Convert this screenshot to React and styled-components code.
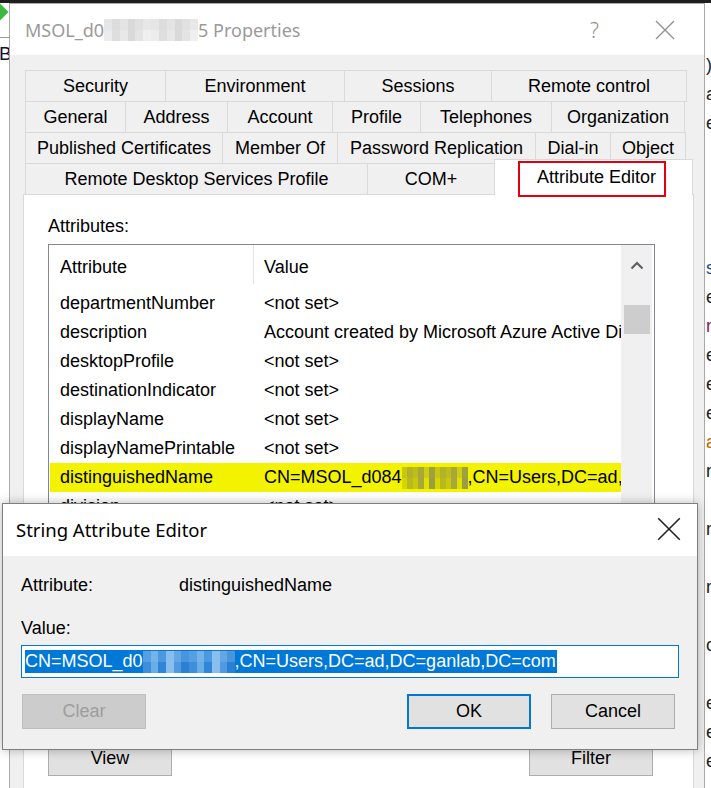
import styled, { createGlobalStyle } from 'styled-components';

const GlobalStyle = createGlobalStyle`
  html, body { margin: 0; padding: 0; background: #fff; }
  body { font-family: 'Liberation Sans', Arial, sans-serif; overflow: hidden; }
  * { box-sizing: border-box; }
`;

const tabRows = [
  [['Security', 141], ['Environment', 180], ['Sessions', 148], ['Remote control', 196]],
  [['General', 101], ['Address', 103], ['Account', 106], ['Profile', 89], ['Telephones', 132], ['Organization', 134]],
  [['Published Certificates', 198], ['Member Of', 116], ['Password Replication', 199], ['Dial-in', 76], ['Object', 76]],
];

const attributes = [
  ['departmentNumber', '<not set>'],
  ['description', 'Account created by Microsoft Azure Active Directory Connect'],
  ['desktopProfile', '<not set>'],
  ['destinationIndicator', '<not set>'],
  ['displayName', '<not set>'],
  ['displayNamePrintable', '<not set>'],
  ['distinguishedName', null],
  ['division', '<not set>'],
  ['dnQualifier', '<not set>'],
  ['dSCorePropagationData', '0x0 = ( )'],
  ['employeeID', '<not set>'],
  ['employeeNumber', '<not set>'],
  ['employeeType', '<not set>'],
  ['extensionName', '<not set>'],
  ['facsimileTelephoneNumber', '<not set>'],
  ['gecos', '<not set>'],
];

// letters of the app behind, cut by the window edge
const stripLetters = [
  [')', '#222'], ['a', '#222'], ['e', '#222'], ['', '#000'], ['', '#000'], ['', '#000'],
  ['', '#000'], ['s', '#1a4f8a'], ['e', '#222'], ['r', '#7a1e6a'], ['e', '#222'], ['e', '#222'],
  ['e', '#222'], ['a', '#c06000'], ['r', '#222'], ['', '#000'], ['r', '#222'], ['', '#000'],
  ['r', '#222'], ['', '#000'], ['c', '#222'], ['', '#000'], ['e', '#222'], ['e', '#222'],
  ['e', '#222'],
];

export default function App() {
  return (
    <>
      <GlobalStyle />
      <Desktop>
        <TopBar />
        <Screen>
          <LeftStrip>
            <GreenMark />
            <StripRule />
            <StripLetter>B</StripLetter>
          </LeftStrip>

          <Window>
            <TitleBar>
              <TitleText inactive>
                MSOL_d0
                <Pixelated tone="gray" w={94} />
                5 Properties
              </TitleText>
              <Caption inactive>
                <HelpGlyph>?</HelpGlyph>
                <CloseIcon color="#8f8f8f" />
              </Caption>
            </TitleBar>

            <WindowBody>
              <TabStrip>
                {tabRows.map((row, i) => (
                  <TabRow key={i}>
                    {row.map(([label, w]) => (
                      <Tab key={label} w={w}>{label}</Tab>
                    ))}
                  </TabRow>
                ))}
                <TabRow>
                  <Tab w={343}>Remote Desktop Services Profile</Tab>
                  <Tab w={128}>COM+</Tab>
                  <ActiveTab>
                    Attribute Editor
                    <Highlight />
                  </ActiveTab>
                </TabRow>
              </TabStrip>

              <Panel>
                <FieldLabel>Attributes:</FieldLabel>
                <ListBox>
                  <ListColumns>
                    <HeaderRow>
                      <NameCell header>Attribute</NameCell>
                      <ValueCell header>Value</ValueCell>
                    </HeaderRow>
                    {attributes.map(([name, value]) => (
                      <Row key={name} selected={value === null}>
                        <NameCell>{name}</NameCell>
                        <ValueCell>
                          {value === null ? (
                            <>
                              CN=MSOL_d084
                              <Pixelated tone="olive" w={66} />
                              ,CN=Users,DC=ad,DC=ganlab,DC=com
                            </>
                          ) : (
                            value
                          )}
                        </ValueCell>
                      </Row>
                    ))}
                  </ListColumns>
                  <ScrollBar>
                    <ScrollArrow>
                      <svg width="14" height="9" viewBox="0 0 14 9">
                        <path d="M1.5 7.5 L7 2 L12.5 7.5" fill="none" stroke="#606060" strokeWidth="2.2" />
                      </svg>
                    </ScrollArrow>
                    <Thumb />
                  </ScrollBar>
                </ListBox>
                <PanelButtons>
                  <Button w={124}>View</Button>
                  <Button w={124} style={{ marginRight: 2 }}>Filter</Button>
                </PanelButtons>
              </Panel>
            </WindowBody>
          </Window>

          <RightStrip>
            {stripLetters.map(([ch, c], i) => (
              <StripLine key={i} color={c}>{ch}</StripLine>
            ))}
          </RightStrip>
        </Screen>

        <Dialog>
          <TitleBar dialog>
            <TitleText>String Attribute Editor</TitleText>
            <Caption dialog>
              <CloseIcon color="#222" size={24} />
            </Caption>
          </TitleBar>
          <DialogBody>
            <InfoRow>
              <InfoLabel>Attribute:</InfoLabel>
              <span>distinguishedName</span>
            </InfoRow>
            <ValueLabel>Value:</ValueLabel>
            <TextBox>
              <Selection>
                CN=MSOL_d0
                <Pixelated tone="blue" w={92} />
                ,CN=Users,DC=ad,DC=ganlab,DC=com
              </Selection>
            </TextBox>
            <DialogButtons>
              <Button w={124} disabled style={{ marginLeft: 1 }}>Clear</Button>
              <Spacer />
              <Button w={124} primary>OK</Button>
              <Button w={124} style={{ marginRight: 4 }}>Cancel</Button>
            </DialogButtons>
          </DialogBody>
        </Dialog>
      </Desktop>
    </>
  );
}

function CloseIcon({ color, size = 20 }) {
  return (
    <svg width={size} height={size} viewBox="0 0 20 20">
      <path d="M1 1 L19 19 M19 1 L1 19" stroke={color} strokeWidth="1.3" fill="none" />
    </svg>
  );
}

const palettes = {
  gray: ['#ececec', '#dedede', '#e8e8e8', '#d9d9d9', '#e4e4e4', '#efefef'],
  olive: ['#d6d600', '#b8b820', '#c9c90c', '#a8a838', '#e0e000', '#9c9c40'],
  blue: ['#3d8fdc', '#6aaee8', '#2f86d8', '#88bfee', '#4f9ae0', '#2a80d4'],
};

const Pixelated = styled.span`
  display: inline-block;
  flex: none;
  vertical-align: middle;
  width: ${(p) => p.w}px;
  height: 22px;
  background: linear-gradient(
    90deg,
    ${(p) => palettes[p.tone].map((c, i, a) => `${c} ${(i / a.length) * 100}% ${((i + 1) / a.length) * 100}%`).join(', ')}
  );
  background-size: ${(p) => p.w / 2}px 11px;
  position: relative;
  &::after {
    content: '';
    position: absolute;
    inset: 0;
    background: linear-gradient(180deg, ${(p) => palettes[p.tone][3]}55 0 50%, transparent 50% 100%);
    background-size: 13px 22px;
  }
`;

const Desktop = styled.div`
  position: relative;
  width: 711px;
  height: 788px;
  overflow: hidden;
  background: #fff;
`;

const TopBar = styled.div`
  height: 3px;
  background: #1e1e1e;
`;

const Screen = styled.div`
  display: flex;
  height: 785px;
`;

const LeftStrip = styled.div`
  width: 9px;
  flex: none;
  display: flex;
  flex-direction: column;
  overflow: hidden;
`;

const GreenMark = styled.div`
  width: 12px;
  height: 12px;
  margin: 3px 0 0 -6px;
  background: #3cb83c;
  transform: rotate(45deg);
`;

const StripRule = styled.div`
  height: 1px;
  background: #9a9a9a;
  margin-top: 19px;
`;

const StripLetter = styled.div`
  font-size: 19px;
  line-height: 20px;
  margin: 6px 0 0 -1px;
  color: #10103a;
`;

const RightStrip = styled.div`
  flex: 1;
  overflow: hidden;
  padding: 48px 0 0 1px;
`;

const StripLine = styled.div`
  height: 29px;
  font-size: 18px;
  line-height: 29px;
  color: ${(p) => p.color};
`;

const Window = styled.div`
  width: 696px;
  flex: none;
  border: 1px solid #aaaaaa;
  border-bottom: none;
  display: flex;
  flex-direction: column;
  background: #f0f0f0;
`;

const TitleBar = styled.div`
  height: ${(p) => (p.dialog ? 52 : 51)}px;
  flex: none;
  background: #fff;
  display: flex;
  align-items: center;
  padding-left: ${(p) => (p.dialog ? 13 : 15)}px;
`;

const TitleText = styled.div`
  font-family: 'Noto Sans', 'Open Sans', sans-serif;
  font-size: ${(p) => (p.inactive ? 18 : 18.5)}px;
  color: ${(p) => (p.inactive ? '#9a9a9a' : '#000')};
  white-space: nowrap;
  display: flex;
  align-items: center;
  margin-top: ${(p) => (p.inactive ? 0 : -2)}px;
`;

const Caption = styled.div`
  margin-left: auto;
  display: flex;
  align-items: center;
  gap: ${(p) => (p.inactive ? 56 : 0)}px;
  padding-right: ${(p) => (p.dialog ? 16 : 29)}px;
  margin-top: ${(p) => (p.dialog ? -2 : 0)}px;
`;

const HelpGlyph = styled.span`
  font-family: 'Noto Sans', sans-serif;
  font-size: 21px;
  color: #8f8f8f;
  font-weight: 300;
`;

const WindowBody = styled.div`
  flex: 1;
  display: flex;
  flex-direction: column;
  padding: 15px 10px 0 13px;
`;

const TabStrip = styled.div`
  display: flex;
  flex-direction: column;
  padding: 0 0 0 2px;
`;

const TabRow = styled.div`
  display: flex;
  align-items: flex-end;
  height: 31px;
`;

const Tab = styled.div`
  width: ${(p) => p.w}px;
  height: 32px;
  flex: none;
  margin: 0 -1px -1px 0;
  border: 1px solid #d9d9d9;
  background: #f0f0f0;
  font-size: 18px;
  color: #000;
  display: flex;
  align-items: center;
  justify-content: center;
  white-space: nowrap;
`;

const ActiveTab = styled.div`
  position: relative;
  z-index: 2;
  width: 199px;
  height: 36px;
  flex: none;
  margin: 0 -1px -1px 0;
  border: 1px solid #d9d9d9;
  border-bottom: none;
  background: #fff;
  font-size: 18px;
  display: flex;
  align-items: center;
  justify-content: center;
  padding: 0 0 0 6px;
  white-space: nowrap;
`;

const Highlight = styled.span`
  position: absolute;
  left: 23px;
  top: 1px;
  width: 148px;
  height: 36px;
  border: 2px solid #e3000f;
`;

const Panel = styled.div`
  flex: 1;
  background: #fff;
  border: 1px solid #d9d9d9;
  border-bottom: none;
  display: flex;
  flex-direction: column;
  padding: 20px 38px 0 24px;
`;

const FieldLabel = styled.div`
  font-size: 18px;
  line-height: 22px;
  margin-bottom: 7px;
`;

const ListBox = styled.div`
  height: 482px;
  flex: none;
  border: 1px solid #828790;
  display: flex;
  overflow: hidden;
`;

const ListColumns = styled.div`
  flex: 1;
  min-width: 0;
  overflow: hidden;
`;

const HeaderRow = styled.div`
  display: flex;
  height: 44px;
  align-items: flex-start;
  font-size: 18px;
`;

const Row = styled.div`
  display: flex;
  height: 29px;
  align-items: center;
  font-size: 18px;
  margin-left: 1px;
  background: ${(p) => (p.selected ? '#f3f300' : 'transparent')};
`;

const NameCell = styled.div`
  width: ${(p) => (p.header ? 205 : 204)}px;
  height: ${(p) => (p.header ? '39px' : 'auto')};
  flex: none;
  padding: ${(p) => (p.header ? '6px 0 0 11px' : '0 0 0 10px')};
  white-space: nowrap;
  overflow: hidden;
  display: flex;
  align-items: center;
  border-right: ${(p) => (p.header ? '1px solid #e5e5e5' : 'none')};
`;

const ValueCell = styled.div`
  flex: 1;
  min-width: 0;
  height: ${(p) => (p.header ? '39px' : 'auto')};
  padding: ${(p) => (p.header ? '6px 0 0 10px' : '0 0 0 10px')};
  white-space: nowrap;
  overflow: hidden;
  display: flex;
  align-items: center;
`;

const ScrollBar = styled.div`
  width: 31px;
  flex: none;
  background: #f0f0f0;
  display: flex;
  flex-direction: column;
  align-items: center;
  margin-right: 2px;
`;

const ScrollArrow = styled.div`
  height: 40px;
  width: 100%;
  display: flex;
  align-items: center;
  justify-content: center;
`;

const Thumb = styled.div`
  width: 26px;
  height: 29px;
  margin-top: 20px;
  background: #cdcdcd;
`;

const PanelButtons = styled.div`
  display: flex;
  justify-content: space-between;
  margin-top: 15px;
`;

const Button = styled.div`
  width: ${(p) => p.w}px;
  height: 35px;
  flex: none;
  display: flex;
  align-items: center;
  justify-content: center;
  font-size: 18px;
  background: ${(p) => (p.disabled ? '#cccccc' : '#e1e1e1')};
  color: ${(p) => (p.disabled ? '#9d9d9d' : '#000')};
  border: ${(p) => (p.primary ? '2px solid #0078d7' : `1px solid ${p.disabled ? '#bfbfbf' : '#adadad'}`)};
`;

const Dialog = styled.div`
  position: absolute;
  left: 2px;
  top: 503px;
  width: 696px;
  height: 247px;
  border: 1px solid #7e7e7e;
  background: #f0f0f0;
  box-shadow: 0 0 10px rgba(0, 0, 0, 0.28);
  display: flex;
  flex-direction: column;
  z-index: 5;
`;

const DialogBody = styled.div`
  flex: 1;
  padding: 18px 18px 0 18px;
  display: flex;
  flex-direction: column;
  font-size: 18px;
`;

const InfoRow = styled.div`
  display: flex;
  line-height: 22px;
`;

const InfoLabel = styled.span`
  width: 158px;
  flex: none;
`;

const ValueLabel = styled.div`
  line-height: 22px;
  margin-top: 21px;
`;

const TextBox = styled.div`
  margin-top: 6px;
  height: 33px;
  border: 1px solid #0078d7;
  background: #fff;
  display: flex;
  align-items: center;
  padding-left: 3px;
`;

const Selection = styled.span`
  background: #0078d7;
  color: #fff;
  font-size: 18px;
  line-height: 23px;
  white-space: nowrap;
  display: inline-flex;
  align-items: center;
  padding-right: 1px;
`;

const DialogButtons = styled.div`
  display: flex;
  gap: 20px;
  margin-top: 16px;
`;

const Spacer = styled.div`
  flex: 1;
`;
